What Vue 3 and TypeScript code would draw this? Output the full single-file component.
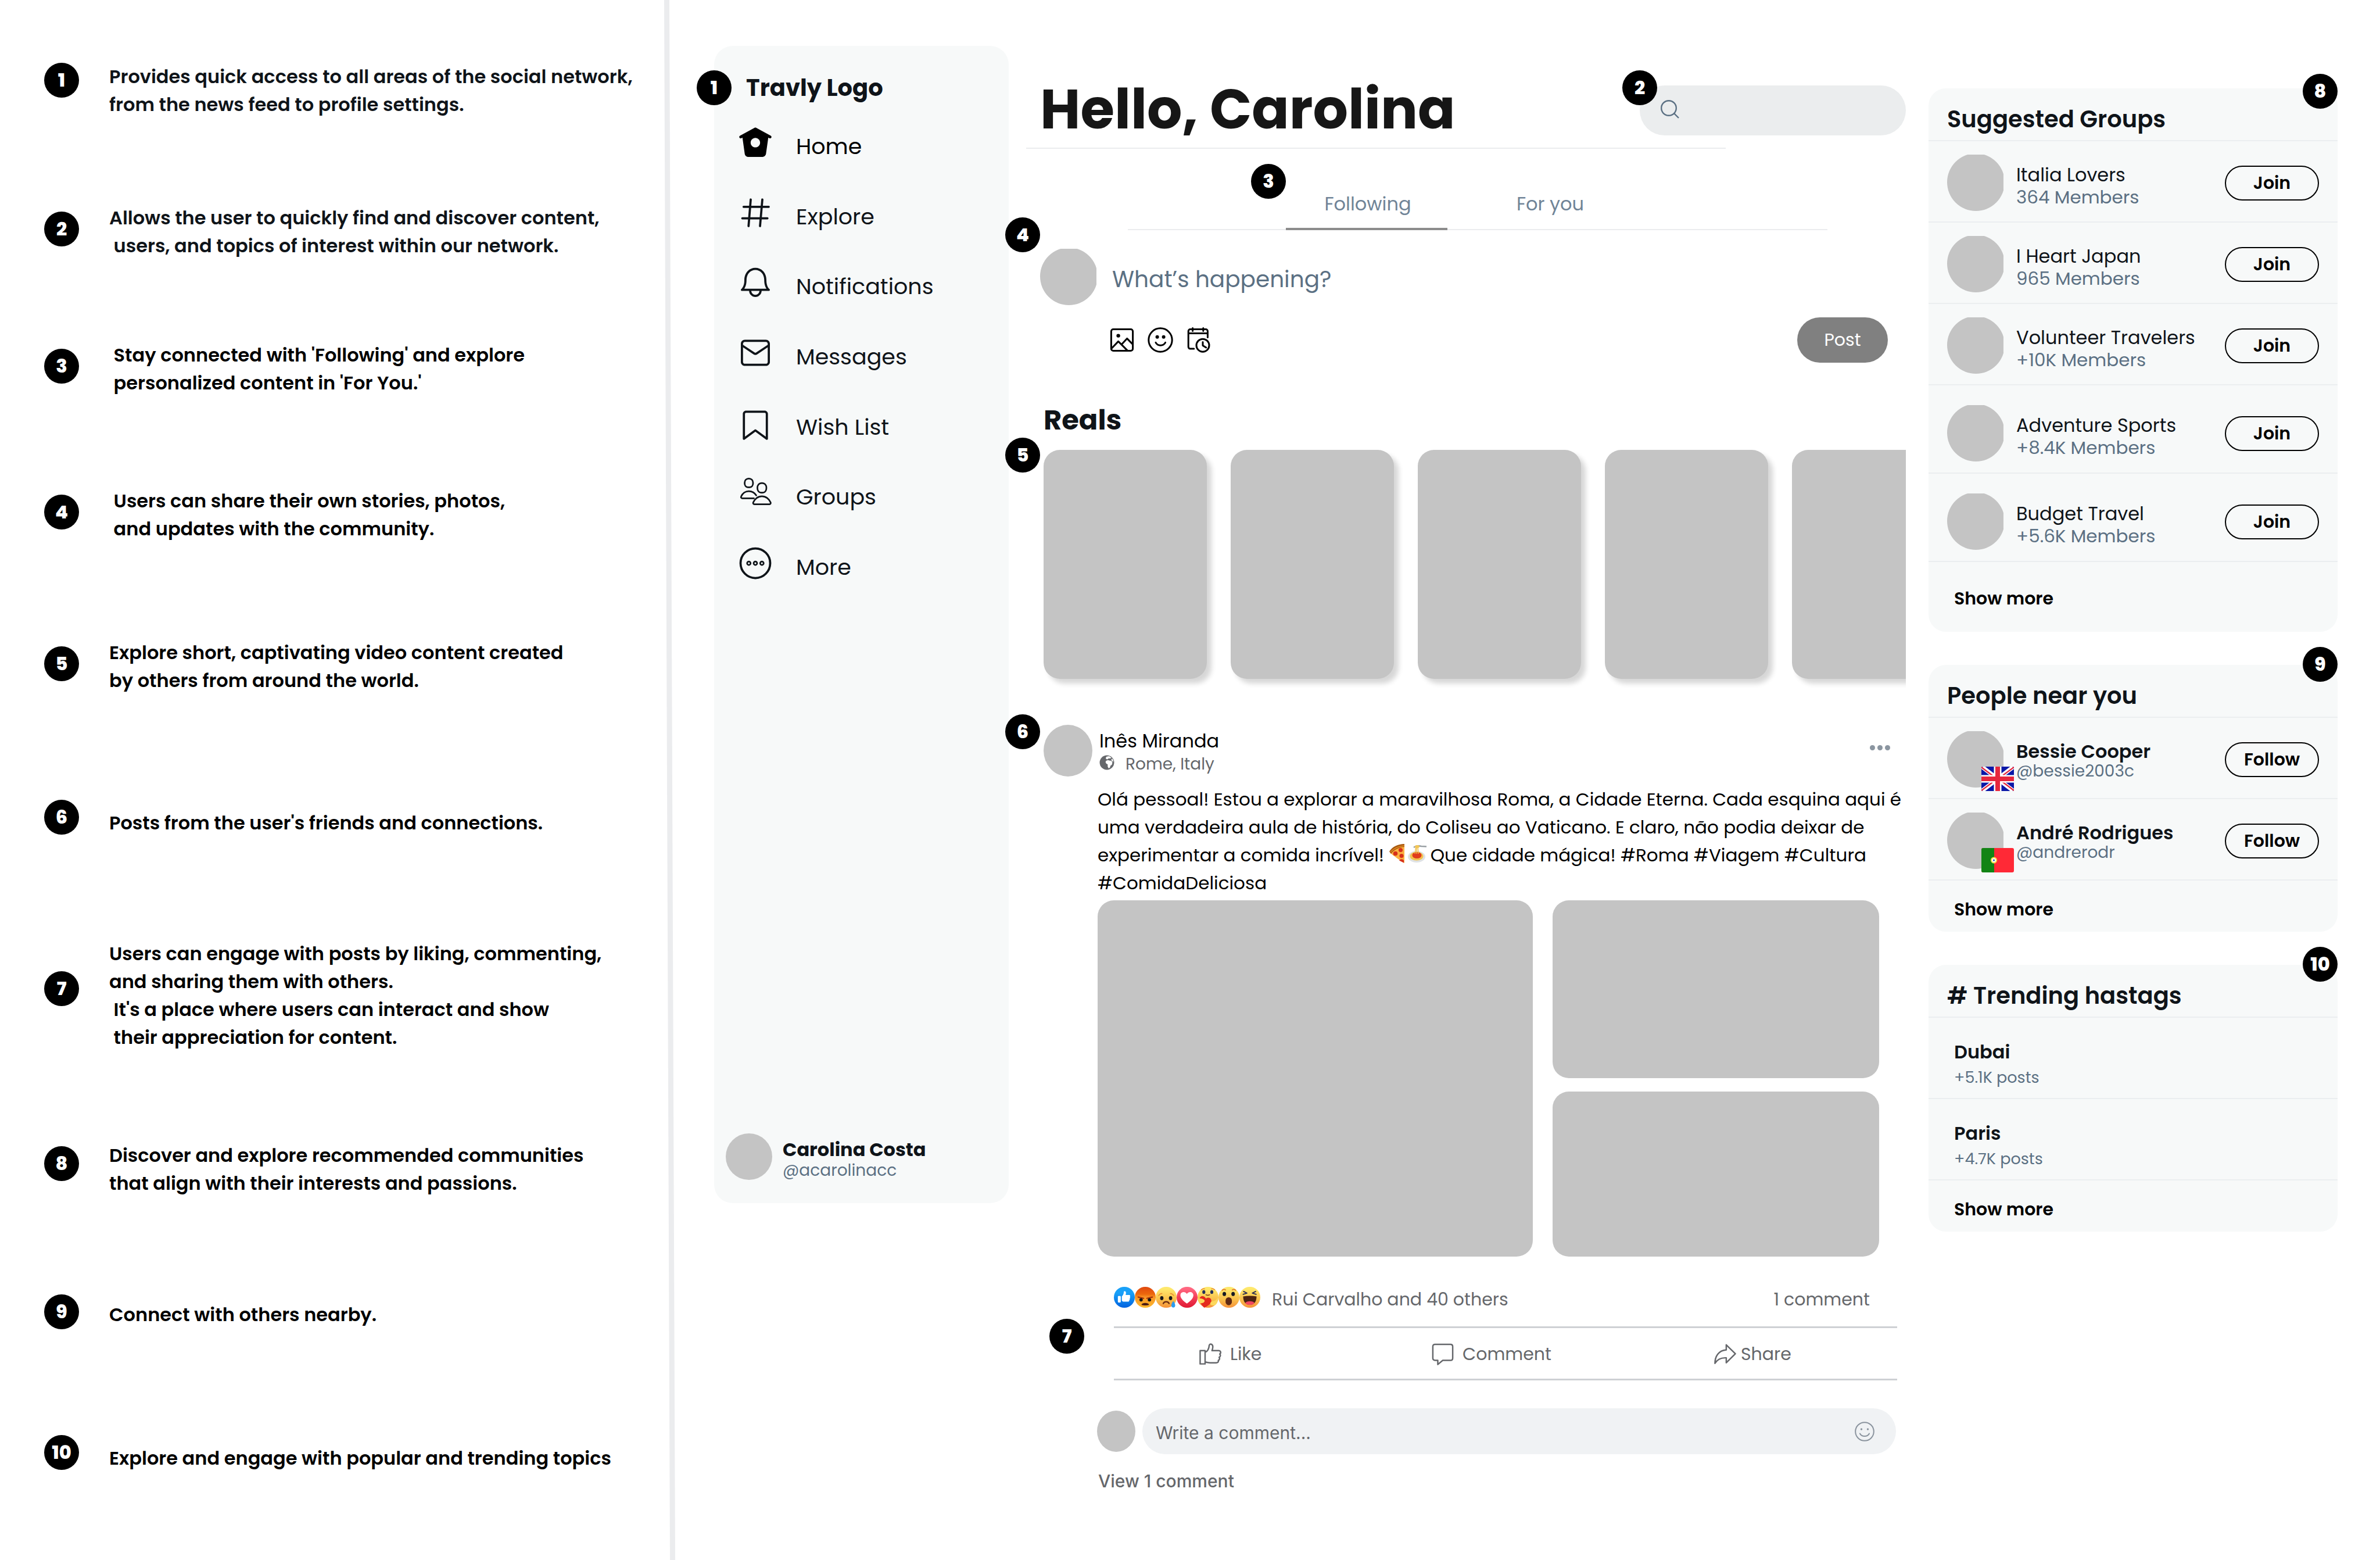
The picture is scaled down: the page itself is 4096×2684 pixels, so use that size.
<script setup lang="ts">
interface Note {
  id: number
  lines: string[]
  shape: 'level' | 'slight' | 'pair' | 'single' | 'near' | 'quad'
}

interface Group {
  name: string
  members: string
  roomy: boolean
}

interface Person {
  name: string
  handle: string
  flag: 'uk' | 'pt'
}

const notes: Note[] = [
  { id: 1, shape: 'level', lines: ['Provides quick access to all areas of the social network,', 'from the news feed to profile settings.'] },
  { id: 2, shape: 'pair', lines: ['Allows the user to quickly find and discover content,', ' users, and topics of interest within our network.'] },
  { id: 3, shape: 'pair', lines: [" Stay connected with 'Following' and explore", " personalized content in 'For You.'"] },
  { id: 4, shape: 'pair', lines: [' Users can share their own stories, photos,', ' and updates with the community.'] },
  { id: 5, shape: 'pair', lines: ['Explore short, captivating video content created', 'by others from around the world.'] },
  { id: 6, shape: 'single', lines: ["Posts from the user's friends and connections."] },
  { id: 7, shape: 'quad', lines: ['Users can engage with posts by liking, commenting,', 'and sharing them with others.', " It's a place where users can interact and show", ' their appreciation for content.'] },
  { id: 8, shape: 'slight', lines: ['Discover and explore recommended communities', 'that align with their interests and passions.'] },
  { id: 9, shape: 'near', lines: ['Connect with others nearby.'] },
  { id: 10, shape: 'single', lines: ['Explore and engage with popular and trending topics'] },
]

const nav: string[] = ['Home', 'Explore', 'Notifications', 'Messages', 'Wish List', 'Groups', 'More']

const groups: Group[] = [
  { name: 'Italia Lovers', members: '364 Members', roomy: false },
  { name: 'I Heart Japan', members: '965 Members', roomy: false },
  { name: 'Volunteer Travelers', members: '+10K Members', roomy: false },
  { name: 'Adventure Sports', members: '+8.4K Members', roomy: true },
  { name: 'Budget Travel', members: '+5.6K Members', roomy: true },
]

const people: Person[] = [
  { name: 'Bessie Cooper', handle: '@bessie2003c', flag: 'uk' },
  { name: 'André Rodrigues', handle: '@andrerodr', flag: 'pt' },
]

const trends = [
  { tag: 'Dubai', posts: '+5.1K posts' },
  { tag: 'Paris', posts: '+4.7K posts' },
]
</script>

<template>
  <div class="page">
    <section class="notes" aria-label="Notes">
      <ol class="note-list">
        <li v-for="n in notes" :key="n.id" class="note" :class="n.shape">
          <span class="badge">{{ n.id }}</span>
          <p class="note-text" :class="{ ink: n.id < 3 }">
            <span v-for="l in n.lines" :key="l">{{ l }}</span>
          </p>
        </li>
      </ol>
      <svg class="divider" viewBox="0 0 20 2684" preserveAspectRatio="none" aria-hidden="true">
        <polygon points="1,0 10,0 20,2684 11,2684" fill="#ebecee" />
      </svg>
    </section>

    <div class="app">
      <aside class="sidebar">
        <span class="badge pin pin-side">1</span>
        <p class="brand">Travly Logo</p>
        <nav class="nav">
          <a v-for="item in nav" :key="item" href="#" class="nav-item" :class="{ current: item === 'Home' }">
            <svg class="nav-icon" viewBox="0 0 24 24" aria-hidden="true">
              <path v-if="item === 'Home'" fill="#000" d="M22.58 7.35L12.475 1.897c-.297-.16-.654-.16-.95 0L1.425 7.35c-.486.264-.667.87-.405 1.356.18.335.525.525.88.525.16 0 .324-.038.475-.12l.734-.396 1.59 11.25c.216 1.214 1.31 2.062 2.66 2.062h9.282c1.35 0 2.444-.848 2.662-2.088l1.588-11.225.737.398c.485.263 1.092.082 1.354-.404.263-.486.08-1.093-.404-1.355zM12 15.435c-1.795 0-3.25-1.455-3.25-3.25s1.455-3.25 3.25-3.25 3.25 1.455 3.25 3.25-1.455 3.25-3.25 3.25z" />
              <path v-else-if="item === 'Explore'" class="line" d="M3.9 7.9h17.3M3 15.8h17.3M8.8 2.9L7.3 21.2M16.8 2.9l-1.6 18.3" />
              <path v-else-if="item === 'Notifications'" d="M21.697 16.468c-.02-.016-2.14-1.64-2.103-6.03.02-2.532-.812-4.782-2.347-6.335C15.872 2.71 14.01 1.94 12.005 1.93h-.013c-2.004.01-3.866.78-5.242 2.174-1.534 1.553-2.368 3.802-2.346 6.334.037 4.33-2.02 5.967-2.102 6.03-.26.193-.366.53-.265.838.102.308.39.515.712.515h4.92c.102 2.31 1.997 4.16 4.33 4.16s4.226-1.85 4.327-4.16h4.922c.322 0 .61-.206.71-.514.103-.307-.003-.645-.263-.838zM12 20.478c-1.505 0-2.73-1.177-2.828-2.658h5.656c-.1 1.48-1.323 2.66-2.828 2.66zM4.38 16.32c.74-1.132 1.548-3.028 1.524-5.896-.018-2.16.644-3.982 1.913-5.267C8.91 4.05 10.397 3.437 12 3.43c1.603.008 3.087.62 4.18 1.728 1.27 1.285 1.933 3.106 1.915 5.267-.024 2.868.785 4.765 1.525 5.896H4.38z" />
              <path v-else-if="item === 'Messages'" d="M19.25 3.018H4.75C3.233 3.018 2 4.252 2 5.77v12.495c0 1.518 1.233 2.753 2.75 2.753h14.5c1.517 0 2.75-1.235 2.75-2.753V5.77c0-1.518-1.233-2.752-2.75-2.752zm-14.5 1.5h14.5c.69 0 1.25.56 1.25 1.25v.714l-8.05 5.367c-.273.18-.626.182-.9-.002L3.5 6.482v-.714c0-.69.56-1.25 1.25-1.25zm14.5 14.998H4.75c-.69 0-1.25-.56-1.25-1.25V8.24l7.24 4.83c.383.256.822.384 1.26.384.44 0 .877-.128 1.26-.383l7.24-4.83v10.022c0 .69-.56 1.25-1.25 1.25z" />
              <path v-else-if="item === 'Wish List'" d="M19.9 23.5c-.157 0-.312-.05-.442-.144L12 17.928l-7.458 5.43c-.228.164-.53.19-.782.06-.25-.127-.41-.385-.41-.667V5.6c0-1.24 1.01-2.25 2.25-2.25h12.798c1.24 0 2.25 1.01 2.25 2.25v17.15c0 .282-.158.54-.41.668-.106.055-.223.082-.34.082zM12 16.25c.155 0 .31.048.44.144l6.71 4.883V5.6c0-.412-.337-.75-.75-.75H5.6c-.413 0-.75.338-.75.75v15.677l6.71-4.883c.13-.096.285-.144.44-.144z" />
              <g v-else-if="item === 'Groups'" class="line thin">
                <path d="M7.5 2.1c1.8 0 2.9 1.3 2.9 3.1 0 1.6-.9 2.9-2.2 2.9H6.8c-1.3 0-2.2-1.3-2.2-2.9 0-1.8 1.1-3.1 2.9-3.1z" />
                <path d="M11 15.7H3c-.7 0-1.1-.6-.8-1.2.9-2.1 2.9-3.7 5.3-3.7 2.1 0 4 1.1 5.1 2.9" />
                <path d="M16.5 5.2c2 0 3.1 1.5 3.1 3.4s-1 3.2-2.4 3.2h-1.4c-1.4 0-2.4-1.3-2.4-3.2s1.1-3.4 3.1-3.4z" />
                <path d="M11.3 19.8c-.7 0-1-.6-.8-1.2 1-2.5 3.3-4.3 6-4.3s5 1.8 6 4.3c.2.6-.1 1.2-.8 1.2z" />
              </g>
              <g v-else class="line">
                <circle cx="12" cy="12" r="10.2" />
                <g class="rings">
                  <circle cx="7.5" cy="12" r="1.2" />
                  <circle cx="12" cy="12" r="1.2" />
                  <circle cx="16.5" cy="12" r="1.2" />
                </g>
              </g>
            </svg>
            <span class="nav-label">{{ item }}</span>
          </a>
        </nav>
        <div class="profile">
          <span class="profile-photo"></span>
          <div class="profile-text">
            <p class="profile-name">Carolina Costa</p>
            <p class="profile-handle">@acarolinacc</p>
          </div>
        </div>
      </aside>

      <main class="main">
        <header class="top">
          <h1>Hello, Carolina</h1>
          <label class="search">
            <span class="badge pin pin-search">2</span>
            <svg viewBox="0 0 32 32" aria-hidden="true">
              <circle cx="14" cy="14" r="12.8" />
              <path d="M23.5 23.5L31 31" />
            </svg>
            <input type="search" aria-label="Search" />
          </label>
        </header>
        <hr class="rule" />

        <div class="tabs" role="tablist">
          <span class="badge pin pin-tabs">3</span>
          <button type="button" role="tab" class="tab selected" aria-selected="true">Following</button>
          <button type="button" role="tab" class="tab" aria-selected="false">For you</button>
        </div>

        <section class="compose">
          <span class="badge pin pin-compose">4</span>
          <div class="compose-line">
            <svg class="face" viewBox="0 0 96 96" aria-hidden="true"><circle cx="49" cy="47" r="49" /></svg>
            <input type="text" aria-label="Write a post" placeholder="What’s happening?" />
          </div>
          <div class="compose-tools">
            <button type="button" class="tool" aria-label="Add picture">
              <svg viewBox="0 0 24 24">
                <rect x="2.7" y="2.7" width="18.6" height="18.6" rx="1.8" />
                <circle class="dot" cx="8.8" cy="8.3" r="1.6" />
                <path d="M2.9 19.4l5.9-6.2 8 8M11.8 15.6l4.5-4.9 4.9 5" />
              </svg>
            </button>
            <button type="button" class="tool" aria-label="Add emoji">
              <svg viewBox="0 0 24 24">
                <circle cx="12" cy="12" r="10.1" />
                <circle class="dot" cx="9.3" cy="9.4" r="1.5" />
                <circle class="dot" cx="14.8" cy="9.4" r="1.5" />
                <path d="M8 14.2c.8 1.5 2.3 2.4 4.1 2.4s3.4-.9 4.2-2.4" />
              </svg>
            </button>
            <button type="button" class="tool" aria-label="Schedule">
              <svg viewBox="0 0 24 24">
                <path d="M7.9 19.5H4.7c-.9 0-1.6-.7-1.6-1.6V4.4c0-.9.7-1.6 1.6-1.6h13.4c.9 0 1.6.7 1.6 1.6V9.8M3.3 6.3h16.3M6.8 1.7v2.6M15.9 1.7v2.6" />
                <circle cx="15.5" cy="16.6" r="5.5" />
                <path d="M15.5 13.7v3l2.9 1.8" />
              </svg>
            </button>
            <button type="button" class="post-button">Post</button>
          </div>
        </section>

        <section class="reels">
          <span class="badge pin pin-reels">5</span>
          <h2>Reals</h2>
          <div class="strip">
            <div v-for="n in 5" :key="n" class="reel"></div>
          </div>
        </section>

        <article class="post">
          <span class="badge pin pin-post">6</span>
          <header class="post-head">
            <span class="author-photo"></span>
            <div class="author">
              <p class="author-name">Inês Miranda</p>
              <p class="place">
                <svg viewBox="0 0 24 24" aria-hidden="true">
                  <circle cx="12" cy="12" r="11.5" fill="#65676b" />
                  <path fill="#fff" d="M11.5 2.6l4-.7 3.6 2.2-1.8 1.5-2.6-.4-1.8 1.8-2-.5-.8-1.900zM10.600 9.300l3-1.300 3.200.9 2.300.2 1.700 2.800-.9 3.500-2.300 1.600-.7 2.900-2.200 1.300-1.500-2.900.1-3.300-2.300-1.300-1.200-2.300z" />
                  <path fill="#fff" d="M19.200 6.200l1.500-.3c.9 1.400 1.500 3 1.600 4.700l-1.500-.5-1.600-2z" />
                </svg>
                <span>Rome, Italy</span>
              </p>
            </div>
            <button type="button" class="dots" aria-label="Post options"><i></i><i></i><i></i></button>
          </header>

          <p class="copy">
            Olá pessoal! Estou a explorar a maravilhosa Roma, a Cidade Eterna. Cada esquina aqui é<br />
            uma verdadeira aula de história, do Coliseu ao Vaticano. E claro, não podia deixar de<br />
            experimentar a comida incrível!
            <svg class="food" viewBox="0 0 28 34" role="img" aria-label="Pizza">
              <path d="M2 15C8 8 17 4 27 3v30C19 28 9 21 2 15z" fill="#fbb040" />
              <path d="M1 13C6 5 16 0 27 0v5C17 6 9 10 4 17z" fill="#a8590f" />
              <path d="M3 14C9 7 17 4 27 3" fill="none" stroke="#e08a26" stroke-width="1.5" />
              <g fill="#d6301a"><circle cx="20.5" cy="10.5" r="3.6" /><circle cx="11.5" cy="16.5" r="3.8" /><circle cx="22" cy="20.5" r="3.5" /><path d="M18 28.500c2-3 6-3 8 0v4z" /></g>
            </svg><svg class="food pasta" viewBox="0 0 34 34" role="img" aria-label="Spaghetti">
              <ellipse cx="16" cy="22" rx="15" ry="10" fill="#dfe2e4" />
              <ellipse cx="16" cy="21" rx="11.5" ry="7.5" fill="#f2c14e" />
              <ellipse cx="16.5" cy="19.5" rx="8" ry="5.5" fill="#e03b1c" />
              <path d="M13 17l2-13M16 17V4M19 17L18 4" stroke="#f0bd45" stroke-width="1.4" />
              <path d="M11 6c4-3 9-3 13-2l9 .5" fill="none" stroke="#9aa0a4" stroke-width="2.6" />
              <ellipse cx="17" cy="4.5" rx="4" ry="2.5" fill="#f3c655" />
            </svg>
            Que cidade mágica! #Roma #Viagem #Cultura<br />
            #ComidaDeliciosa
          </p>

          <div class="gallery">
            <div class="photo lead"></div>
            <div class="photo"></div>
            <div class="photo"></div>
          </div>

          <div class="reactions">
            <span class="faces">
              <svg viewBox="0 0 50 50" role="img" aria-label="Like">
                <defs>
                  <linearGradient id="blue" x2="0" y2="1"><stop offset=".3" stop-color="#18a0f8" /><stop offset="1" stop-color="#0262df" /></linearGradient>
                  <linearGradient id="gold" x2="0" y2="1"><stop offset=".1" stop-color="#fee86c" /><stop offset=".6" stop-color="#f9c04b" /><stop offset="1" stop-color="#f6923a" /></linearGradient>
                  <linearGradient id="rage" x2="0" y2="1"><stop offset="0" stop-color="#e0480f" /><stop offset=".35" stop-color="#ec670d" /><stop offset=".5" stop-color="#f99625" /><stop offset="1" stop-color="#fbb82f" /></linearGradient>
                  <linearGradient id="rose" x2="0" y2="1"><stop offset=".1" stop-color="#ff6680" /><stop offset=".5" stop-color="#f33e58" /><stop offset="1" stop-color="#e01a33" /></linearGradient>
                </defs>
                <circle cx="25" cy="25" r="25" fill="url(#blue)" />
                <path fill="#fff" d="M9.5 24c0-1.5 1-2 2-2h3c1.2 0 2 .8 2 2v11c0 1.5-.8 2.5-2 2.5h-3c-1.200 0-2-1-2-2.500zM19 23c2-2 4-5 4.500-8 .2-2.500 0-4.500 2-4.500 3 0 3.800 3 3.300 5.500L28 19.500h8c3.500 0 3.700 3.500 2 4.500 1.500 1.300 1.300 3.500-.5 4.300 1 1.500.3 3.500-1 4 .5 2-.8 3.200-3 3.200h-9c-3 0-5.500-1-5.500-3.500z" />
              </svg>
              <svg viewBox="0 0 50 50" role="img" aria-label="Angry">
                <circle cx="25" cy="25" r="25" fill="url(#rage)" />
                <path d="M8 24.5l13 3M42 24.5l-13 3" stroke="#a5300c" stroke-width="3" stroke-linecap="round" />
                <g fill="#161616"><circle cx="15" cy="31" r="4" /><circle cx="35" cy="31" r="4" /></g>
                <path d="M16 43c1-6 17-6 18 0-5 2-13 2-18 0z" fill="#4a1a12" />
              </svg>
              <svg viewBox="0 0 50 50" role="img" aria-label="Sad">
                <circle cx="25" cy="25" r="25" fill="url(#gold)" />
                <path d="M7 21c2-3 5-5 8-5M43 21c-2-3-5-5-8-5" fill="none" stroke="#e78b2d" stroke-width="2" stroke-linecap="round" />
                <g fill="#15171c"><ellipse cx="14.5" cy="27" rx="4" ry="4.8" /><ellipse cx="35.5" cy="27" rx="4" ry="4.8" /></g>
                <path d="M18 40c2-6 12-6 14 0" fill="none" stroke="#6a2b12" stroke-width="3" stroke-linecap="round" />
                <path d="M42 34c3 4 4.5 7 4.5 10.5a4.5 5 0 0 1-9 0C37.5 41 39 38 42 34z" fill="#2b9cf0" />
              </svg>
              <svg viewBox="0 0 50 50" role="img" aria-label="Love">
                <circle cx="25" cy="25" r="25" fill="url(#rose)" />
                <path fill="#fff" d="M24.5 40C15 33 9 27 9 20c0-8.5 11-10.5 15.5-3C29 9.5 40 11.5 40 20c0 7-6 13-15.5 20z" />
              </svg>
              <svg viewBox="0 0 50 50" role="img" aria-label="Care">
                <circle cx="25" cy="25" r="25" fill="url(#gold)" />
                <path d="M9 7c2-2 5-3 8-2M41 7c-2-2-5-3-8-2" fill="none" stroke="#e78b2d" stroke-width="2" stroke-linecap="round" />
                <g fill="#24305c"><ellipse cx="15" cy="12.5" rx="3.6" ry="4.4" /><ellipse cx="34" cy="12.5" rx="3.6" ry="4.4" /></g>
                <path d="M20 19c3 1.5 6 1.5 9 0" fill="none" stroke="#7a3b12" stroke-width="2" stroke-linecap="round" />
                <path d="M16 50C6 41 3 31 6 25c4-5 11-3 14 3 5-4 13-2 13 5 0 8-9 13-17 17z" fill="#e42a1d" />
                <path d="M1 28c6-1 14 0 16 5 0 6-9 8-14 4zM49 24c-2 6-6 9-11 10-6 1-10 5-6 9 5 3 12 2 15-6z" fill="#fcd85c" />
              </svg>
              <svg viewBox="0 0 50 50" role="img" aria-label="Wow">
                <circle cx="25" cy="25" r="25" fill="url(#gold)" />
                <path d="M9 8.5c2-3 5-3 8-1M41 8.5c-2-3-5-3-8-1" fill="none" stroke="#e0782a" stroke-width="2.4" stroke-linecap="round" />
                <g fill="#161a24"><ellipse cx="14" cy="17" rx="4.2" ry="5" /><ellipse cx="35" cy="17" rx="4.2" ry="5" /></g>
                <rect x="17" y="25" width="15" height="19" rx="7.5" fill="#5f2a14" />
              </svg>
              <svg viewBox="0 0 50 50" role="img" aria-label="Haha">
                <circle cx="25" cy="25" r="25" fill="url(#gold)" />
                <path d="M10 11l8 4-9 3M39 11l-8 4 9 3" fill="none" stroke="#2b2f55" stroke-width="2.6" stroke-linecap="round" stroke-linejoin="round" />
                <path d="M9 23c10-2 22-2 32 0 0 13-6 20-16 20S9 36 9 23z" fill="#4c2310" />
                <path d="M14 39c3-6 19-6 22 0-5 6-17 6-22 0z" fill="#f2475f" />
              </svg>
            </span>
            <span>Rui Carvalho and 40 others</span>
            <span class="count">1 comment</span>
          </div>

          <div class="actions">
            <span class="badge pin pin-actions">7</span>
            <button type="button" class="action">
              <svg viewBox="0 0 40 40" aria-hidden="true"><path d="M1.5 13.5h9v24h-9zM10.5 16.5c5-2 7-6 7.5-13 2.5-4 6.5-1 6.5 3 0 3-.8 5-1.5 7h12c4.5 0 4.5 5 2 6 2 2 1.3 5-1 6 1.5 2 .5 5-1.5 5.5.5 3-1 4.5-4 4.500H20c-4 0-6-1-9.500-1.500" /></svg>
              Like
            </button>
            <button type="button" class="action">
              <svg viewBox="0 0 40 40" aria-hidden="true"><path d="M6 2h28c2.5 0 4 1.5 4 4v21c0 2.5-1.5 4-4 4H20l-9 7.5V31H6c-2.5 0-4-1.5-4-4V6c0-2.5 1.5-4 4-4z" /></svg>
              Comment
            </button>
            <button type="button" class="action tight">
              <svg viewBox="0 0 40 40" aria-hidden="true"><path d="M22 3l16.500 16L22 35.500v-9C13 26 6 29 1.500 36.500 1.500 24 8 13 22 12z" /></svg>
              Share
            </button>
          </div>

          <div class="reply">
            <span class="reply-photo"></span>
            <label class="reply-box">
              <input type="text" aria-label="Write a comment" placeholder="Write a comment..." />
              <svg viewBox="0 0 34 34" aria-hidden="true">
                <circle cx="17" cy="17" r="15.8" />
                <path d="M9 20.5c3 6 13 6 16 0" />
                <g class="dot"><circle cx="11.5" cy="13" r="1.7" /><circle cx="22.5" cy="13" r="1.7" /></g>
              </svg>
            </label>
          </div>
          <a href="#" class="view">View 1 comment</a>
        </article>
      </main>

      <aside class="panels">
        <section class="panel">
          <span class="badge pin pin-panel">8</span>
          <h3>Suggested Groups</h3>
          <div v-for="g in groups" :key="g.name" class="row" :class="{ roomy: g.roomy }">
            <svg class="face" viewBox="0 0 96 96" aria-hidden="true"><circle cx="49" cy="47" r="49" /></svg>
            <div class="who">
              <p class="group-name">{{ g.name }}</p>
              <p class="group-members">{{ g.members }}</p>
            </div>
            <button type="button" class="pill">Join</button>
          </div>
          <div class="more tall"><a href="#">Show more</a></div>
        </section>

        <section class="panel">
          <span class="badge pin pin-near">9</span>
          <h3>People near you</h3>
          <div v-for="p in people" :key="p.name" class="row">
            <div class="flagged">
              <svg class="face" viewBox="0 0 96 96" aria-hidden="true"><circle cx="49" cy="47" r="49" /></svg>
              <svg v-if="p.flag === 'uk'" class="flag" viewBox="0 0 56 42" role="img" aria-label="United Kingdom">
                <rect width="56" height="42" rx="3" fill="#0a17a7" />
                <path d="M2 1l52 40M54 1L2 41" stroke="#fff" stroke-width="7" />
                <path d="M0 1l24 18M56 1L37 15M0 41l19-14M56 41L32 23" stroke="#e6273e" stroke-width="2.2" />
                <path d="M28 0v42M0 21h56" stroke="#fff" stroke-width="13" />
                <path d="M28 0v42M0 21h56" stroke="#e6273e" stroke-width="8" />
              </svg>
              <svg v-else class="flag" viewBox="0 0 56 42" role="img" aria-label="Portugal">
                <rect width="56" height="42" rx="3" fill="#ff2936" />
                <path d="M3 0h19v42H3c-2 0-3-1-3-3V3c0-2 1-3 3-3z" fill="#128415" />
                <circle cx="21.5" cy="21" r="5.5" fill="#f9e04b" />
                <circle cx="21.5" cy="21" r="3.4" fill="#fff" />
                <circle cx="21.5" cy="21" r="1.5" fill="#1a47b8" />
              </svg>
            </div>
            <div class="who person">
              <p class="person-name">{{ p.name }}</p>
              <p class="person-handle">{{ p.handle }}</p>
            </div>
            <button type="button" class="pill">Follow</button>
          </div>
          <div class="more"><a href="#">Show more</a></div>
        </section>

        <section class="panel">
          <span class="badge pin pin-near">10</span>
          <h3># Trending hastags</h3>
          <div v-for="t in trends" :key="t.tag" class="trend">
            <p class="trend-tag">{{ t.tag }}</p>
            <p class="trend-posts">{{ t.posts }}</p>
          </div>
          <div class="more"><a href="#">Show more</a></div>
        </section>
      </aside>
    </div>
  </div>
</template>

<style>
body {
  margin: 0;
  background: #fff;
}
</style>

<style scoped>
.page {
  display: grid;
  grid-template-columns: 1162fr 2934fr;
  min-height: 100vh;
  overflow: hidden;
  font-family: Poppins, Inter, "Open Sans", sans-serif;
  color: #0f1419;
}
.page * {
  box-sizing: border-box;
}
p, h1, h2, h3, ol {
  margin: 0;
  padding: 0;
}
button,
input {
  font: inherit;
  color: inherit;
  background: none;
  border: 0;
  padding: 0;
  margin: 0;
  outline: 0;
}
button {
  cursor: pointer;
}
a {
  color: inherit;
  text-decoration: none;
}

.badge {
  display: flex;
  align-items: center;
  justify-content: center;
  flex: none;
  width: 60px;
  height: 60px;
  border-radius: 50%;
  background: #000;
  color: #fff;
  font-size: 32px;
  font-weight: 800;
  line-height: 40px;
}
.pin {
  position: absolute;
  z-index: 2;
}
.pin-side { left: -30px; top: 42px; }
.pin-search { left: -30px; top: -26px; }
.pin-tabs { left: 212px; top: -26px; }
.pin-compose { left: -36px; top: -22px; }
.pin-reels { left: -36px; top: 129px; }
.pin-post { left: -36px; top: -18px; }
.pin-actions { left: -111px; top: -16px; }
.pin-panel { right: 0; top: -25px; }
.pin-near { right: 0; top: -31px; }

/* Notes */
.notes {
  display: flex;
}
.note-list {
  flex: 1;
  display: grid;
  grid-template-rows: 243px 236px 251px 261px 277px 241px 347px 263px 242px auto;
  align-content: start;
  padding: 108px 0 0 76px;
  list-style: none;
}
.note {
  display: flex;
  align-items: flex-start;
  gap: 52px;
}
.slight .badge { margin-top: 8px; }
.pair .badge { margin-top: 13px; }
.quad .badge { margin-top: 54px; }
.single .note-text { margin-top: 16px; }
.near .note-text { margin-top: 11px; }
.note-text {
  font-size: 32px;
  line-height: 48px;
  font-weight: 600;
  color: #000;
  white-space: pre;
}
.note-text.ink {
  color: #0f1419;
}
.note-text span {
  display: block;
}
.divider {
  flex: none;
  width: 20px;
  height: 100%;
}

/* App */
.app {
  display: grid;
  grid-template-columns: 507fr 1523fr 704fr;
  column-gap: 30px;
  align-items: start;
  padding: 0 73px 0 67px;
}

/* Sidebar */
.sidebar {
  position: relative;
  display: flex;
  flex-direction: column;
  min-height: 1991px;
  margin-top: 79px;
  padding: 48px 20px 40px;
  border-radius: 32px;
  background: #f7f9f9;
}
.brand {
  padding-left: 35px;
  font-size: 40px;
  line-height: 48px;
  font-weight: 700;
}
.nav {
  display: grid;
  grid-auto-rows: 1fr;
  height: 844px;
  margin-top: 10px;
}
.nav-item {
  display: flex;
  align-items: center;
  gap: 40px;
  padding-left: 21px;
}
.nav-icon {
  width: 60px;
  height: 60px;
  fill: #0f1419;
}
.nav-label {
  padding-top: 14px;
  font-size: 38px;
  line-height: 48px;
}
.current {
  color: #000;
}
.line {
  fill: none;
  stroke: #0f1419;
  stroke-width: 1.5;
  stroke-linecap: round;
  stroke-linejoin: round;
}
.thin,
.rings {
  stroke-width: 1.1;
}
.profile {
  display: flex;
  align-items: center;
  gap: 18px;
  margin-top: auto;
}
.profile-photo {
  width: 80px;
  height: 80px;
  border-radius: 50%;
  background: #c4c4c4;
}
.profile-text {
  padding-top: 8px;
}
.profile-name {
  font-size: 32px;
  line-height: 40px;
  font-weight: 700;
}
.profile-handle {
  font-size: 28px;
  line-height: 32px;
  color: #5b7083;
}

/* Main column */
.main {
  min-width: 0;
  padding-right: 9px;
}
.top {
  display: flex;
  justify-content: space-between;
  align-items: flex-start;
  padding: 132px 0 10px 24px;
}
h1 {
  font-size: 95px;
  line-height: 112px;
  font-weight: 700;
  color: #161616;
}
.search {
  position: relative;
  display: flex;
  align-items: center;
  width: 458px;
  height: 86px;
  margin-top: 15px;
  padding: 0 36px;
  border-radius: 43px;
  background: #ebedee;
}
.search svg {
  flex: none;
  width: 32px;
  height: 32px;
  margin-bottom: 4px;
  fill: none;
  stroke: #5b7083;
  stroke-width: 2.4;
}
.search input {
  flex: 1;
  min-width: 0;
  padding-left: 16px;
  font-size: 32px;
}
.rule {
  width: 79.5%;
  height: 2px;
  margin: 0;
  border: 0;
  background: #ebecee;
}
.tabs {
  position: relative;
  display: flex;
  gap: 36px;
  width: 79.5%;
  margin: 52px 0 0 175px;
  padding-left: 272px;
  box-shadow: inset 0 -2px #ebecee;
}
.tab {
  width: 278px;
  height: 88px;
  padding: 2px 0 0 4px;
  border-bottom: 4px solid transparent;
  font-size: 32px;
  color: #708497;
}
.tab.selected {
  border-bottom-color: #8c8c8c;
}

.face {
  display: block;
  flex: none;
  width: 97px;
  height: 97px;
  fill: #c4c4c4;
}
.compose {
  position: relative;
  padding: 32px 31px 0 24px;
}
.compose-line {
  display: flex;
  align-items: center;
  gap: 27px;
}
.compose-line input {
  flex: 1;
  height: 56px;
  margin-top: 8px;
  font-size: 39px;
}
input::placeholder {
  opacity: 1;
  color: #5b7083;
}
.compose-tools {
  display: flex;
  align-items: center;
  gap: 18px;
  margin-top: 21px;
  padding-left: 117px;
}
.tool,
.tool svg {
  display: block;
  width: 48px;
  height: 48px;
}
.tool svg {
  fill: none;
  stroke: #000;
  stroke-width: 1.5;
  stroke-linecap: round;
  stroke-linejoin: round;
}
.tool .dot {
  fill: #000;
  stroke: none;
}
.post-button {
  width: 156px;
  height: 78px;
  margin-left: auto;
  border-radius: 39px;
  background: #808080;
  color: #fff;
  font-size: 30px;
}

.reels {
  position: relative;
  padding-top: 71px;
}
h2 {
  padding-left: 30px;
  font-size: 48px;
  line-height: 56px;
  font-weight: 700;
}
.strip {
  display: flex;
  gap: 41px;
  margin-top: 23px;
  padding: 0 0 32px 30px;
  overflow: hidden;
}
.reel {
  flex: none;
  width: 281px;
  height: 394px;
  border-radius: 28px;
  background: #c4c4c4;
  box-shadow: 8px 8px 8px rgba(0, 0, 0, 0.16);
}

.post {
  position: relative;
  margin-top: 47px;
}
.post-head {
  display: flex;
  align-items: flex-start;
  padding: 0 27px 0 30px;
}
.author-photo {
  flex: none;
  width: 84px;
  height: 89px;
  border-radius: 50%;
  background: #c4c4c4;
}
.author {
  flex: 1;
  padding: 8px 0 0 12px;
}
.author-name {
  font-size: 32px;
  line-height: 40px;
  color: #000;
}
.place {
  display: flex;
  gap: 19px;
  padding-top: 2px;
  font-size: 28px;
  line-height: 36px;
  color: #65676b;
}
.place svg {
  width: 26px;
  height: 26px;
  margin-top: 2px;
}
.dots {
  display: flex;
  gap: 4px;
  margin-top: 35px;
}
.dots i {
  width: 9px;
  height: 9px;
  border-radius: 50%;
  background: #8b95a0;
}
.copy {
  margin-top: 15px;
  padding-left: 123px;
  font-size: 31px;
  line-height: 48px;
  color: #000;
  white-space: nowrap;
}
.food {
  width: 28px;
  height: 34px;
  vertical-align: -4px;
}
.pasta {
  width: 34px;
  margin: 0 -3px 0 4px;
}
.gallery {
  display: grid;
  grid-template-columns: 748fr 561fr;
  grid-template-rows: 306px 284px;
  gap: 23px 34px;
  margin-top: 6px;
  padding: 0 46px 0 123px;
}
.photo {
  border-radius: 28px;
  background: #c4c4c4;
}
.lead {
  grid-row: span 2;
}
.reactions {
  display: flex;
  align-items: center;
  gap: 20px;
  height: 48px;
  margin-top: 50px;
  padding: 0 62px 0 151px;
  font-size: 30px;
  color: #65676b;
}
.faces {
  display: flex;
}
.faces svg {
  width: 36px;
  height: 36px;
  margin-bottom: 8px;
}
.count {
  margin-left: auto;
}
.actions {
  position: relative;
  display: grid;
  grid-template-columns: 1fr 1fr 1fr;
  height: 93px;
  margin: 22px 15px 0 151px;
  border: solid #ced0d4;
  border-width: 3px 0;
}
.action {
  display: flex;
  align-items: center;
  justify-content: center;
  gap: 15px;
  padding: 2px 48px 0 0;
  font-size: 30px;
  color: #65676b;
}
.action.tight {
  gap: 8px;
}
.action svg {
  width: 38px;
  height: 38px;
  fill: none;
  stroke: #65676b;
  stroke-width: 2.6;
  stroke-linejoin: round;
}
.reply {
  display: flex;
  align-items: center;
  gap: 12px;
  margin-top: 48px;
  padding: 0 17px 0 122px;
}
.reply-photo {
  flex: none;
  width: 66px;
  height: 71px;
  border-radius: 50%;
  background: #c4c4c4;
}
.reply-box {
  flex: 1;
  display: flex;
  align-items: center;
  height: 79px;
  padding: 0 37px 0 23px;
  border-radius: 40px;
  background: #f0f2f4;
}
.reply-box input {
  flex: 1;
  height: 48px;
  margin-top: 4px;
  font-family: Inter, sans-serif;
  font-size: 30px;
}
.reply-box input::placeholder {
  color: #65676b;
}
.reply-box svg {
  width: 34px;
  height: 34px;
  fill: none;
  stroke: #8a939d;
  stroke-width: 2;
  stroke-linecap: round;
}
.reply-box .dot {
  fill: #8a939d;
  stroke: none;
}
.view {
  display: block;
  margin: 26px 0 0 124px;
  font-family: Inter, sans-serif;
  font-size: 30px;
  line-height: 40px;
  font-weight: 500;
  color: #65676b;
}

/* Right column */
.panels {
  display: flex;
  flex-direction: column;
  gap: 57px;
  padding-top: 152px;
}
.panel {
  position: relative;
  border-radius: 30px;
  background: #f7f9f9;
}
h3 {
  height: 91px;
  padding: 29px 0 0 32px;
  border-bottom: 2px solid #ebeef0;
  font-size: 40px;
  line-height: 48px;
  font-weight: 600;
}
.row {
  display: flex;
  align-items: flex-start;
  gap: 22px;
  height: 140px;
  padding: 23px 32px 0;
  border-bottom: 2px solid #ebeef0;
}
.roomy {
  height: 152px;
  padding-top: 34px;
}
.who {
  flex: 1;
  padding-top: 16px;
}
.group-name,
.group-members {
  font-size: 32px;
  line-height: 38px;
}
.group-members {
  font-size: 31px;
  color: #5b7083;
}
.person {
  padding-top: 18px;
}
.person-name {
  font-size: 32px;
  line-height: 34px;
  font-weight: 600;
}
.person-handle {
  font-size: 28px;
  line-height: 34px;
  color: #5b7083;
}
.pill {
  width: 162px;
  height: 60px;
  margin-top: 19px;
  border: 2px solid #000;
  border-radius: 30px;
  font-size: 30px;
  font-weight: 600;
  color: #000;
}
.flagged {
  position: relative;
}
.flag {
  position: absolute;
  left: 59px;
  top: 61px;
  width: 56px;
  height: 42px;
}
.more {
  display: flex;
  align-items: center;
  height: 88px;
  padding: 12px 0 0 44px;
  font-size: 30px;
  font-weight: 600;
  color: #000;
}
.more.tall {
  height: 120px;
  padding-top: 6px;
}
.trend {
  height: 140px;
  padding: 35px 0 0 44px;
  border-bottom: 2px solid #ebeef0;
}
.trend-tag {
  font-size: 32px;
  line-height: 48px;
  font-weight: 600;
}
.trend-posts {
  margin-top: 4px;
  font-size: 27px;
  line-height: 32px;
  color: #5b7083;
}
</style>
